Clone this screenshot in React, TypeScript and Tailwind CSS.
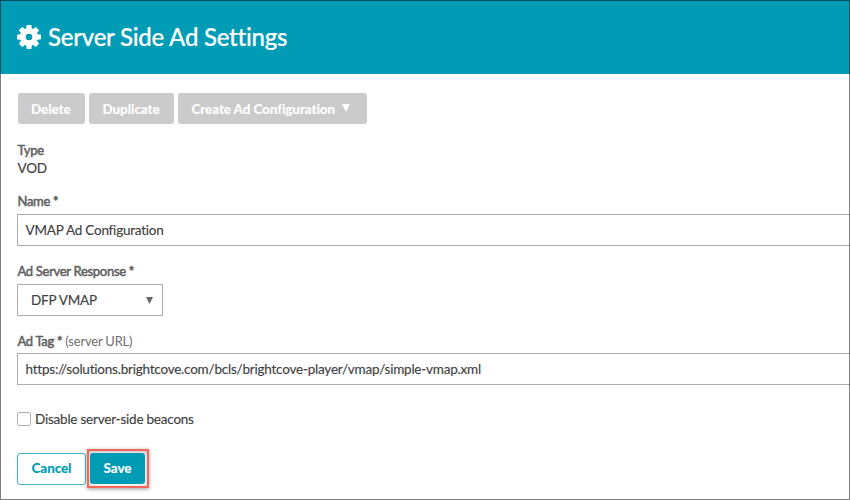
import React from "react";

const teeth = [0, 45, 90, 135, 180, 225, 270, 315];

function Gear() {
  return (
    <svg viewBox="-12 -12 24 24" className="h-6 w-6 shrink-0" fill="white">
      <circle r="6.1" fill="none" stroke="white" strokeWidth="5.6" />
      {teeth.map((angle) => (
        <path key={angle} d="M-3.1 -7.6 L-2.3 -12 H2.3 L3.1 -7.6 Z" transform={`rotate(${angle})`} />
      ))}
    </svg>
  );
}

function Triangle({ className }: { className: string }) {
  return (
    <svg viewBox="0 0 8 8" className={className} fill="currentColor">
      <path d="M0 0H8L4 8Z" />
    </svg>
  );
}

const disabledButton =
  "flex h-[31px] items-center rounded-[3px] bg-[#cbcbcb] pt-[2px] pl-[13.5px] text-[13.5px] leading-none font-black tracking-[-0.12px] text-white";

const labelText =
  "h-[18px] pl-[0.5px] text-[13px] leading-[18px] font-normal tracking-[-0.3px] text-[#606060] [-webkit-text-stroke:0.5px_#606060]";

const valueText = "text-[13.5px] tracking-[-0.22px] [-webkit-text-stroke:0.15px_#3f3f3f]";

export default function App() {
  return (
    <div className="relative flex h-[500px] w-[850px] flex-col overflow-hidden bg-white font-['Lato',sans-serif] whitespace-nowrap text-[#3f3f3f]">
      <header className="flex h-[74px] shrink-0 items-center bg-[#009cb6] pl-[17px] text-white">
        <Gear />
        <h1 className="ml-[7px] text-[24px] leading-none font-medium tracking-[-0.24px] [-webkit-text-stroke:0.2px_white]">
          Server Side Ad Settings
        </h1>
      </header>

      <main className="flex flex-col pl-[17px]">
        <div className="mt-[19px] flex gap-1 pl-[0.5px]">
          <button className={`${disabledButton} w-[67.5px]`}>Delete</button>
          <button className={`${disabledButton} w-[85px]`}>Duplicate</button>
          <button className={`${disabledButton} w-[189px]`}>
            Create Ad Configuration
            <Triangle className="mb-[4px] ml-[7px] h-2 w-2" />
          </button>
        </div>

        <div className={`${labelText} mt-[17px]`}>Type</div>
        <div className={`${valueText} h-[18px] pl-[0.5px] leading-[18px]`}>VOD</div>

        <label className={`${labelText} mt-[15px]`}>Name *</label>
        <div className={`${valueText} mt-[4px] flex h-8 items-center border border-r-0 border-[#acacac] pl-[7.5px]`}>
          VMAP Ad Configuration
        </div>

        <label className={`${labelText} mt-[16px]`}>Ad Server Response *</label>
        <div className={`${valueText} mt-[4px] flex h-8 w-[146px] items-center justify-between border border-[#acacac] pr-[9.5px] pl-[13px]`}>
          DFP VMAP
          <Triangle className="h-[7px] w-[7px] text-[#666]" />
        </div>

        <label className={`${labelText} mt-[16px]`}>
          Ad Tag *{" "}
          <span className="tracking-[-0.2px] text-[#707070] [-webkit-text-stroke:0]">(server URL)</span>
        </label>
        <div className={`${valueText} mt-[3px] flex h-8 items-center border border-r-0 border-[#acacac] pl-[7.5px]`}>
          https://solutions.brightcove.com/bcls/brightcove-player/vmap/simple-vmap.xml
        </div>

        <label className={`${valueText} mt-[25px] flex h-[18px] items-center`}>
          <span className="mr-[4px] h-[14px] w-[14px] rounded-[2px] border border-[#b0b0b0]" />
          Disable server-side beacons
        </label>

        <div className="mt-[21px] flex items-center">
          <button className="h-8 w-[69px] rounded-[3px] border border-[#42b5c8] pt-px text-[13.5px] leading-none font-black tracking-[-0.12px] text-[#009cb6]">
            Cancel
          </button>
          <div className="ml-px flex h-[39px] w-[62px] items-center border-2 border-[#f3685a] pl-px shadow-[0_1px_4px_rgba(0,0,0,0.4),inset_0_1px_4px_rgba(0,0,0,0.3)]">
            <button className="h-[31px] w-[55px] rounded-[3px] bg-[#009cb6] pt-px text-[13.5px] leading-none font-black tracking-[-0.12px] text-white">
              Save
            </button>
          </div>
        </div>
      </main>
      <div className="pointer-events-none absolute inset-0 border border-black/50" />
    </div>
  );
}
